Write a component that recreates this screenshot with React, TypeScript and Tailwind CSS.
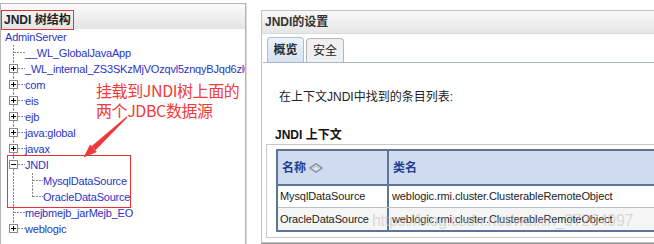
import React from "react";

type Kind = "leaf" | "plus" | "minus";

const LINE = "#8c8c8c";

function TopGutter({ kind, last }: { kind: Kind; last?: boolean }) {
  return (
    <svg width="24" height="16" className="shrink-0" shapeRendering="crispEdges">
      <line x1="12.5" y1="0" x2="12.5" y2={last ? 8 : 16} stroke={LINE} strokeDasharray="2 1" />
      <line x1={kind === "leaf" ? 13 : 17} y1="7.5" x2="24" y2="7.5" stroke={LINE} strokeDasharray="2 1" />
      {kind !== "leaf" && (
        <g>
          <rect x="8.5" y="3.5" width="8" height="8" fill="#fff" stroke="#8a8a8a" />
          <line x1="10" y1="7.5" x2="15" y2="7.5" stroke="#000" />
          {kind === "plus" && <line x1="12.5" y1="5" x2="12.5" y2="10" stroke="#000" />}
        </g>
      )}
    </svg>
  );
}

function ChildGutter({ last }: { last?: boolean }) {
  return (
    <svg width="42" height="16" className="shrink-0" shapeRendering="crispEdges">
      <line x1="12.5" y1="0" x2="12.5" y2="16" stroke={LINE} strokeDasharray="2 1" />
      <line x1="31.5" y1="0" x2="31.5" y2={last ? 8 : 16} stroke={LINE} strokeDasharray="2 1" />
      <line x1="32" y1="7.5" x2="42" y2="7.5" stroke={LINE} strokeDasharray="2 1" />
    </svg>
  );
}

function Row({ children, gutter }: { children: React.ReactNode; gutter: React.ReactNode }) {
  return (
    <div className="flex h-[16px] items-center whitespace-nowrap">
      {gutter}
      <span className="leading-[16px]">{children}</span>
    </div>
  );
}

function SortIcon() {
  return (
    <svg width="14" height="10" viewBox="0 0 14 10" className="ml-[3px]">
      <path d="M1 5 L7 0.8 L13 5 L7 9.2 Z" fill="#e4eaf2" stroke="#8a98a8" strokeWidth="1.6" />
      <path d="M4 5 L7 3 L10 5" fill="none" stroke="#b0bac6" strokeWidth="1" />
    </svg>
  );
}

export default function App() {
  const top: { label: string; kind: Kind }[] = [
    { label: "__WL_GlobalJavaApp", kind: "leaf" },
    { label: "_WL_internal_ZS3SKzMjVOzqvl5znqyBJqd6zl0lkWf", kind: "plus" },
    { label: "com", kind: "plus" },
    { label: "eis", kind: "plus" },
    { label: "ejb", kind: "plus" },
    { label: "java:global", kind: "plus" },
    { label: "javax", kind: "plus" },
  ];

  return (
    <div className="relative flex h-[244px] w-[654px] overflow-hidden bg-white font-['Liberation_Sans','Noto_Sans_CJK_SC',sans-serif]">
      {/* Left panel */}
      <div className="mt-[3px] flex h-[260px] w-[246px] shrink-0 flex-col overflow-hidden border-l border-r border-t border-[#b4b4b4] shadow-[1px_0_0_#dcdcdc]">
        <div className="h-[25px] bg-gradient-to-b from-[#fbfbfb] to-[#e4e4e4] pt-[3px]">
          <div className="inline-flex h-[20px] items-center border-[1.5px] border-[#e83232] px-[2px] text-[12px] font-bold text-[#222]">
            JNDI 树结构
          </div>
        </div>
        <div className="text-[11px] tracking-[-0.2px] text-[#2a34c4]">
          <div className="flex h-[16px] items-center pl-[4px] leading-[16px]">AdminServer</div>
          {top.map((t) => (
            <Row key={t.label} gutter={<TopGutter kind={t.kind} />}>
              {t.label}
            </Row>
          ))}
          <Row gutter={<TopGutter kind="minus" />}>JNDI</Row>
          <Row gutter={<ChildGutter />}>MysqlDataSource</Row>
          <Row gutter={<ChildGutter last />}>OracleDataSource</Row>
          <Row gutter={<TopGutter kind="leaf" />}>mejbmejb_jarMejb_EO</Row>
          <Row gutter={<TopGutter kind="plus" last />}>weblogic</Row>
        </div>
      </div>

      {/* Right panel */}
      <div className="ml-[15px] mt-[10px] flex h-[233px] w-[420px] shrink-0 flex-col border border-[#c2c2c2] shadow-[0_1px_0_#9a9a9a]">
        <div className="flex h-[23px] items-center border-b border-[#dadada] bg-gradient-to-b from-[#f8f8f8] to-[#e6e6e6] pl-[3px] text-[12px] font-bold text-[#333]">
          JNDI的设置
        </div>
        <div className="ml-[1px] mt-[4px] flex h-[25px] items-end gap-[2px] border-b border-[#a6b8cc] pl-[4px]">
          <div className="flex h-[25px] w-[37px] items-center justify-center rounded-t-[4px] border border-b-0 border-[#a8bcd2] bg-gradient-to-b from-[#eef4fa] to-[#d6e3f0] text-[12px] font-bold text-[#2a2a2a]">
            概览
          </div>
          <div className="flex h-[24px] w-[38px] items-center justify-center rounded-t-[4px] border border-b-0 border-[#b6b6b6] bg-[#f0f0f0] text-[12px] text-[#222]">
            安全
          </div>
        </div>
        <div className="pl-[17px] pt-[27px] text-[12px] leading-[14px] text-[#222]">在上下文JNDI中找到的条目列表:</div>
        <div className="pl-[13px] pt-[24px] text-[12px] font-bold leading-[14px] text-[#111]">JNDI 上下文</div>
        <div className="ml-[4px] mt-[2px] border border-[#c8c8c8] pb-[5px] pl-[9px] pt-[4px]">
          <div className="w-[420px] border-2 border-r-0 border-[#5d7596] text-[11px] tracking-[-0.1px] text-[#222]">
            <div className="flex h-[33px] bg-[#cfdcef] font-bold text-[#1d3f96]">
              <div className="flex w-[111px] items-center border-r-2 border-[#5d7596] pl-[4px] text-[12px]">
                名称
                <SortIcon />
              </div>
              <div className="flex items-center pl-[4px] text-[12px]">类名</div>
            </div>
            <div className="flex h-[23px] border-t-2 border-[#5d7596] bg-white">
              <div className="flex w-[111px] items-center border-r-2 border-[#5d7596] pl-[2px]">MysqlDataSource</div>
              <div className="flex items-center pl-[3px]">weblogic.rmi.cluster.ClusterableRemoteObject</div>
            </div>
            <div className="flex h-[23px] border-t border-[#b8c0cc] bg-[#f5f5f5]">
              <div className="flex w-[111px] items-center border-r-2 border-[#5d7596] pl-[2px]">OracleDataSource</div>
              <div className="flex items-center pl-[3px]">weblogic.rmi.cluster.ClusterableRemoteObject</div>
            </div>
          </div>
        </div>
      </div>

      {/* Annotations */}
      <div className="absolute left-[96px] top-[80px] text-[16px] leading-[20px] tracking-[-0.4px] text-[#f23a3a] font-['Noto_Sans_CJK_SC',sans-serif]">
        <div>挂载到JNDI树上面的</div>
        <div>两个JDBC数据源</div>
      </div>
      <div className="absolute left-[7px] top-[155px] h-[53px] w-[124px] border-[1.5px] border-[#e83232]" />
      <svg className="absolute left-0 top-0" width="654" height="244">
        <polygon points="127.4,117.4 126.6,116.6 91.5,146.3 95.5,150.3" fill="#ee3a3a" />
        <polygon points="83.5,157.5 90.1,144.6 96.9,151.9" fill="#ee3a3a" />
      </svg>
      <div className="pointer-events-none absolute left-[372px] top-[211px] whitespace-nowrap text-[16px] leading-[20px] tracking-[-0.3px] text-[rgba(190,190,190,0.55)]">
        https://blog.csdn.net/weixin_37264997
      </div>
    </div>
  );
}
